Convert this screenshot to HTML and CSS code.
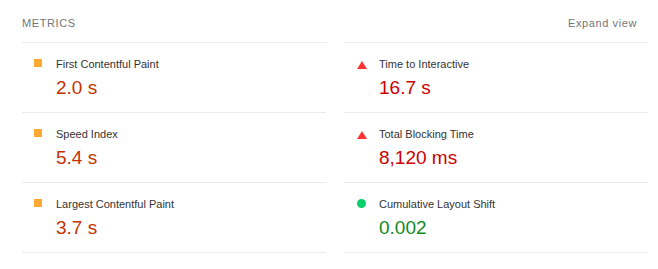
FILE: index.html
```html
<!DOCTYPE html>
<html>
  <head>
    <meta charset="utf-8" />
    <title>Metrics</title>
    <link rel="stylesheet" href="styles.css">
  </head>
  <body>
    <div class="metrics">
      <div class="metrics-header">
        <span class="metrics-title">Metrics</span>
        <span class="metrics-toggle">Expand view</span>
      </div>
      <div class="metrics-grid">
        <div class="metric average">
          <span class="icon square"></span>
          <div class="metric-body">
            <div class="metric-title">First Contentful Paint</div>
            <div class="metric-value">2.0 s</div>
          </div>
        </div>
        <div class="metric fail">
          <svg class="icon triangle" width="10" height="8" viewBox="0 0 10 8"><polygon points="5,0 10,8 0,8" fill="#f33"/></svg>
          <div class="metric-body">
            <div class="metric-title">Time to Interactive</div>
            <div class="metric-value">16.7 s</div>
          </div>
        </div>
        <div class="metric average">
          <span class="icon square"></span>
          <div class="metric-body">
            <div class="metric-title">Speed Index</div>
            <div class="metric-value">5.4 s</div>
          </div>
        </div>
        <div class="metric fail">
          <svg class="icon triangle" width="10" height="8" viewBox="0 0 10 8"><polygon points="5,0 10,8 0,8" fill="#f33"/></svg>
          <div class="metric-body">
            <div class="metric-title">Total Blocking Time</div>
            <div class="metric-value">8,120 ms</div>
          </div>
        </div>
        <div class="metric average">
          <span class="icon square"></span>
          <div class="metric-body">
            <div class="metric-title">Largest Contentful Paint</div>
            <div class="metric-value">3.7 s</div>
          </div>
        </div>
        <div class="metric pass">
          <span class="icon circle"></span>
          <div class="metric-body">
            <div class="metric-title">Cumulative Layout Shift</div>
            <div class="metric-value">0.002</div>
          </div>
        </div>
      </div>
    </div>
  </body>
</html>
```

FILE: styles.css
```css
body {
  margin: 0;
  background: #fff;
  font-family: "Liberation Sans", Arial, sans-serif;
}
.metrics {
  margin: 0 10px 0 22px;
}
.metrics-header {
  display: flex;
  justify-content: space-between;
  padding: 15px 11px 11px 0;
  font-size: 11px;
  line-height: 16px;
  color: #757575;
  letter-spacing: 0.6px;
}
.metrics-title {
  text-transform: uppercase;
}
.metrics-grid {
  display: grid;
  grid-template-columns: 1fr 1fr;
  column-gap: 18px;
}
.metric {
  display: flex;
  align-items: flex-start;
  padding: 12px 0 12px 12px;
  border-bottom: 1px solid #ebebeb;
}
.metric:nth-child(-n+2) {
  border-top: 1px solid #ebebeb;
}
.icon {
  flex: none;
  margin: 4px 14px 0 0;
}
.square {
  width: 8px;
  height: 8px;
  background: #ffa933;
}
.triangle {
  margin: 6px 12px 0 1px;
}
.circle {
  width: 9px;
  height: 9px;
  border-radius: 50%;
  background: #0cce6b;
  margin: 4px 13px 0 1px;
}
.metric-title {
  font-size: 11px;
  line-height: 18px;
  color: #333;
}
.metric-value {
  margin-top: 3px;
  font-size: 19px;
  line-height: 24px;
}
.average .metric-value {
  color: #c33300;
}
.fail .metric-value {
  color: #cc0000;
}
.pass .metric-value {
  color: #118a1e;
}
```
